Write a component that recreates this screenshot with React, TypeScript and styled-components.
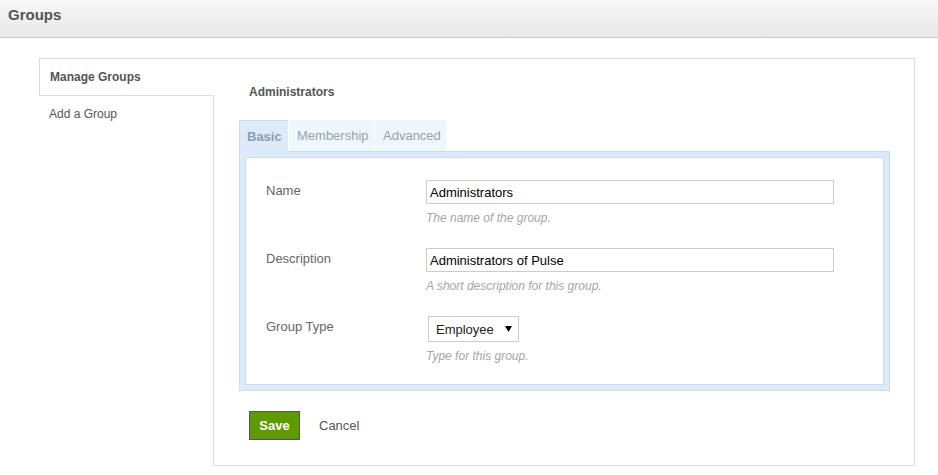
import React from 'react';
import styled, { createGlobalStyle } from 'styled-components';

const GlobalStyle = createGlobalStyle`
  html, body {
    margin: 0;
    padding: 0;
    background: #fff;
  }
  body {
    font-family: "Liberation Sans", Arial, sans-serif;
    color: #555;
  }
`;

const Header = styled.div`
  height: 38px;
  border-bottom: 1px solid #cacaca;
  background: linear-gradient(to bottom, #f8f8f8, #e8e8e8);
  padding: 6px 0 0 8px;
  box-sizing: border-box;
  font-size: 15px;
  line-height: 17px;
  font-weight: bold;
  color: #555;
`;

const Main = styled.div`
  display: flex;
  padding: 20px 0 0 39px;
`;

const Sidebar = styled.div`
  width: 175px;
  margin-right: -1px;
  display: flex;
  flex-direction: column;
`;

const SideItem = styled.div<{ active?: boolean }>`
  height: ${({ active }) => (active ? 38 : 36)}px;
  box-sizing: border-box;
  padding: 0 0 0 ${({ active }) => (active ? 10 : 9)}px;
  display: flex;
  align-items: center;
  font-size: 12px;
  font-weight: ${({ active }) => (active ? 'bold' : 'normal')};
  color: #555;
  background: ${({ active }) => (active ? '#fff' : 'transparent')};
  border: 1px solid ${({ active }) => (active ? '#dcdcdc' : 'transparent')};
  border-right: none;
  position: relative;
  z-index: ${({ active }) => (active ? 1 : 0)};
`;

const Panel = styled.div`
  width: 702px;
  height: 408px;
  box-sizing: border-box;
  border: 1px solid #dcdcdc;
  padding: 26px 25px 0 25px;
`;

const Title = styled.div`
  margin-left: 10px;
  font-size: 12px;
  line-height: 14px;
  font-weight: bold;
  color: #555;
`;

const TabBar = styled.div`
  display: flex;
  gap: 1px;
  margin-top: 21px;
  position: relative;
  z-index: 1;
`;

const Tab = styled.div<{ active?: boolean; w: number }>`
  width: ${({ w }) => w}px;
  box-sizing: border-box;
  padding: 0 0 0 ${({ active }) => (active ? 7 : 8)}px;
  display: flex;
  align-items: center;
  white-space: nowrap;
  font-size: 13px;
  font-weight: ${({ active }) => (active ? 'bold' : 'normal')};
  color: ${({ active }) => (active ? '#8d9db1' : '#9aa2ac')};
  background: ${({ active }) => (active ? '#dceafa' : '#eef6fe')};
  border-left: ${({ active }) => (active ? '1px solid #c6dcf2' : 'none')};
  border-top: ${({ active }) => (active ? '1px solid #c6dcf2' : 'none')};
  margin-bottom: ${({ active }) => (active ? '-1px' : '0')};
  height: ${({ active }) => (active ? '32px' : '31px')};
`;

const Frame = styled.div`
  width: 651px;
  box-sizing: border-box;
  border: 1px solid #c6dcf2;
  background: #dceafa;
  padding: 5px;
`;

const FormBox = styled.div`
  background: #fff;
  border: 1px solid #c6dcf2;
  padding: 22px 20px 21px 20px;
`;

const Row = styled.div`
  display: grid;
  grid-template-columns: 160px 1fr;
  margin-bottom: 23px;
  &:last-child {
    margin-bottom: 0;
  }
`;

const Label = styled.div`
  padding-top: 4px;
  font-size: 13px;
  line-height: 14px;
  color: #666;
`;

const Field = styled.div`
  display: flex;
  flex-direction: column;
  align-items: flex-start;
`;

const TextInput = styled.input`
  width: 408px;
  height: 24px;
  box-sizing: border-box;
  border: 1px solid #cccccc;
  padding: 0 3px;
  margin: 0;
  font-family: "Liberation Sans", Arial, sans-serif;
  font-size: 13px;
  color: #000;
  outline: none;
`;

const Hint = styled.div<{ gap: number }>`
  margin-top: ${({ gap }) => gap}px;
  font-size: 12px;
  line-height: 14px;
  font-style: italic;
  color: #a5a5a5;
`;

const SelectWrap = styled.div`
  position: relative;
  margin-left: 2px;
`;

const Select = styled.select`
  appearance: none;
  -webkit-appearance: none;
  width: 91px;
  height: 26px;
  box-sizing: border-box;
  border: 1px solid #cccccc;
  border-radius: 0;
  background: #fff;
  padding: 0 0 0 7px;
  margin: 0;
  font-family: "Liberation Sans", Arial, sans-serif;
  font-size: 13px;
  color: #222;
  outline: none;
`;

const Arrow = styled.svg`
  position: absolute;
  left: 77px;
  top: 10px;
  pointer-events: none;
`;

const Actions = styled.div`
  display: flex;
  align-items: center;
  gap: 19px;
  margin: 20px 0 0 10px;
`;

const SaveButton = styled.button`
  width: 51px;
  height: 29px;
  box-sizing: border-box;
  border: 1px solid #555;
  background: #5e9a00;
  color: #fff;
  font-family: "Liberation Sans", Arial, sans-serif;
  font-size: 13px;
  font-weight: bold;
  padding: 0;
  cursor: pointer;
`;

const CancelLink = styled.span`
  font-size: 13px;
  color: #555;
  cursor: pointer;
`;

export default function App() {
  return (
    <>
      <GlobalStyle />
      <Header>Groups</Header>
      <Main>
        <Sidebar>
          <SideItem active>Manage Groups</SideItem>
          <SideItem>Add a Group</SideItem>
        </Sidebar>
        <Panel>
          <Title>Administrators</Title>
          <TabBar>
            <Tab active w={49}>Basic</Tab>
            <Tab w={85}>Membership</Tab>
            <Tab w={71}>Advanced</Tab>
          </TabBar>
          <Frame>
            <FormBox>
              <Row>
                <Label>Name</Label>
                <Field>
                  <TextInput defaultValue="Administrators" />
                  <Hint gap={7}>The name of the group.</Hint>
                </Field>
              </Row>
              <Row>
                <Label>Description</Label>
                <Field>
                  <TextInput defaultValue="Administrators of Pulse" />
                  <Hint gap={7}>A short description for this group.</Hint>
                </Field>
              </Row>
              <Row>
                <Label>Group Type</Label>
                <Field>
                  <SelectWrap>
                    <Select defaultValue="Employee">
                      <option>Employee</option>
                      <option>Manager</option>
                    </Select>
                    <Arrow width="7" height="6" viewBox="0 0 7 6">
                      <path d="M0 0 H7 L3.5 6 Z" fill="#000" />
                    </Arrow>
                  </SelectWrap>
                  <Hint gap={7}>Type for this group.</Hint>
                </Field>
              </Row>
            </FormBox>
          </Frame>
          <Actions>
            <SaveButton>Save</SaveButton>
            <CancelLink>Cancel</CancelLink>
          </Actions>
        </Panel>
      </Main>
    </>
  );
}
